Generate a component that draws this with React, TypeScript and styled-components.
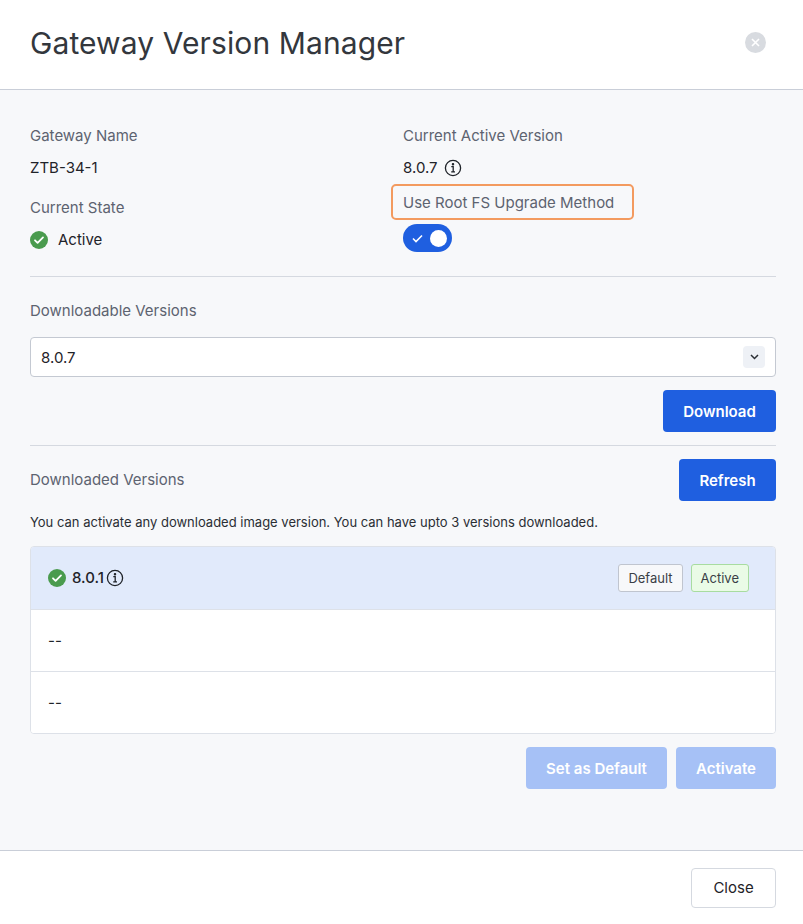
import React from "react";
import styled, { createGlobalStyle } from "styled-components";

const Global = createGlobalStyle`
  html, body { margin: 0; padding: 0; background: #fff; }
  body { font-family: Inter, "Noto Sans", sans-serif; color: #1f2329; }
`;

const Modal = styled.div`width: 803px; height: 924px; display: flex; flex-direction: column;`;
const Header = styled.div`
  height: 90px; box-sizing: border-box; border-bottom: 1px solid #c9ced8;
  display: flex; align-items: center; justify-content: space-between; padding: 0 37px 4px 30px;
`;
const Title = styled.h1`margin: 0; font-weight: 400; font-size: 30px; color: #33373d; letter-spacing: 0.1px;`;
const CloseX = styled.div`
  width: 21px; height: 21px; border-radius: 50%; background: #d8dbe0; color: #fff;
  display: flex; align-items: center; justify-content: center;
`;
const Body = styled.div`
  flex: 1; background: #f7f8fa; padding: 36px 27px 0 30px; display: flex; flex-direction: column;
`;
const Grid = styled.div`display: grid; grid-template-columns: 373px 1fr; row-gap: 20px; padding-bottom: 24px;`;
const Field = styled.div`display: flex; flex-direction: column; gap: 12px;`;
const Label = styled.div`font-size: 15px; color: #5d6370; line-height: 20px;`;
const Value = styled.div`font-size: 15px; color: #1f2329; line-height: 20px; display: flex; align-items: center; gap: 6px;`;
const Outlined = styled.div`
  margin-left: -12px; margin-top: -14px; width: 243px; height: 36px; box-sizing: border-box;
  border: 2px solid #f39a5f; border-radius: 5px; padding: 0 10px; display: flex; align-items: center;
  font-size: 15px; color: #5d6370;
`;
const Toggle = styled.div`
  width: 49px; height: 28px; border-radius: 14px; background: #1f5fe0; margin-top: -8px;
  display: flex; align-items: center; justify-content: space-between; padding: 0 5px 0 9px; box-sizing: border-box;
`;
const Knob = styled.div`width: 17px; height: 17px; border-radius: 50%; background: #fff;`;
const Divider = styled.div`height: 1px; background: #d5d9e0;`;
const Section = styled.div`display: flex; flex-direction: column; padding-top: 24px;`;
const Select = styled.div`
  margin-top: 16px; height: 40px; box-sizing: border-box; background: #fff; border: 1px solid #c4c9d2; border-radius: 4px;
  display: flex; align-items: center; justify-content: space-between; padding: 0 10px; font-size: 15px;
`;
const Chevron = styled.div`
  width: 22px; height: 22px; border-radius: 4px; background: #eef1f6; display: flex; align-items: center; justify-content: center;
`;
const Row = styled.div<{ $mt?: number; $mb?: number }>`
  display: flex; justify-content: flex-end; align-items: center; gap: 9px;
  margin-top: ${p => p.$mt ?? 0}px; margin-bottom: ${p => p.$mb ?? 0}px;
`;
const Btn = styled.button<{ $w: number; $disabled?: boolean }>`
  width: ${p => p.$w}px; height: 42px; border: none; border-radius: 4px; font-family: inherit;
  font-size: 15px; font-weight: 600; color: #fff; background: ${p => (p.$disabled ? "#a6c1f6" : "#1f5fe0")};
`;
const SpaceRow = styled.div`display: flex; justify-content: space-between; align-items: center; margin-top: 13px;`;
const Help = styled.div`font-size: 13px; color: #2a2e34; margin-top: 13px;`;
const Table = styled.div`
  margin-top: 16px; border: 1px solid #dde1e8; border-radius: 4px; background: #fff; overflow: hidden;
`;
const TRow = styled.div<{ $active?: boolean }>`
  height: 62px; box-sizing: border-box; display: flex; align-items: center; justify-content: space-between;
  padding: 0 26px 0 17px; font-size: 15px; background: ${p => (p.$active ? "#e1eafb" : "#fff")};
  & + & { border-top: 1px solid #dde1e8; }
`;
const Tag = styled.span<{ $green?: boolean }>`
  font-size: 13px; padding: 0 9px; height: 26px; display: inline-flex; align-items: center; border-radius: 3px;
  border: 1px solid ${p => (p.$green ? "#a8dca0" : "#c0c5cf")}; background: ${p => (p.$green ? "#eafbe6" : "#f7f8fa")};
  color: #3a3f47;
`;
const Tags = styled.div`display: flex; gap: 8px;`;
const Footer = styled.div`
  height: 73px; border-top: 1px solid #c9ced8; display: flex; justify-content: flex-end; align-items: center; padding-right: 27px;
`;
const CloseBtn = styled.button`
  width: 85px; height: 40px; background: #fff; border: 1px solid #d5d9e0; border-radius: 4px;
  font-family: inherit; font-size: 15px; color: #1f2329;
`;

const Info = () => (
  <svg width="18" height="18" viewBox="0 0 18 18" fill="none" stroke="#1f2329" strokeWidth="1.3">
    <circle cx="9" cy="9" r="7.6" />
    <path d="M7.3 7.6H9.2V12.8M7.2 12.8H11" />
    <circle cx="9" cy="5.2" r="0.6" fill="#1f2329" />
  </svg>
);
const Check = () => (
  <svg width="18" height="18" viewBox="0 0 18 18">
    <circle cx="9" cy="9" r="9" fill="#4a9b4e" />
    <path d="M5 9.3l2.6 2.6L13 6.4" stroke="#fff" strokeWidth="1.8" fill="none" strokeLinecap="round" strokeLinejoin="round" />
  </svg>
);

export default function App() {
  return (
    <Modal>
      <Global />
      <Header>
        <Title>Gateway Version Manager</Title>
        <CloseX>
          <svg width="9" height="9" viewBox="0 0 9 9"><path d="M1 1l7 7M8 1L1 8" stroke="#fff" strokeWidth="1.6" /></svg>
        </CloseX>
      </Header>
      <Body>
        <Grid>
          <Field><Label>Gateway Name</Label><Value>ZTB-34-1</Value></Field>
          <Field><Label>Current Active Version</Label><Value>8.0.7 <Info /></Value></Field>
          <Field><Label>Current State</Label><Value><Check /><span style={{ marginLeft: 4 }}>Active</span></Value></Field>
          <Field>
            <Outlined>Use Root FS Upgrade Method</Outlined>
            <Toggle>
              <svg width="11" height="9" viewBox="0 0 11 9"><path d="M1 4.5l3 3L10 1.5" stroke="#fff" strokeWidth="1.6" fill="none" /></svg>
              <Knob />
            </Toggle>
          </Field>
        </Grid>
        <Divider />
        <Section>
          <Label>Downloadable Versions</Label>
          <Select>
            8.0.7
            <Chevron>
              <svg width="9" height="6" viewBox="0 0 9 6"><path d="M1 1l3.5 3.5L8 1" stroke="#2a2e34" strokeWidth="1.5" fill="none" /></svg>
            </Chevron>
          </Select>
          <Row $mt={13} $mb={13}><Btn $w={113}>Download</Btn></Row>
        </Section>
        <Divider />
        <SpaceRow>
          <Label>Downloaded Versions</Label>
          <Btn $w={97}>Refresh</Btn>
        </SpaceRow>
        <Help>You can activate any downloaded image version. You can have upto 3 versions downloaded.</Help>
        <Table>
          <TRow $active>
            <Value><Check /> <span style={{ fontWeight: 500 }}>8.0.1</span><span style={{ marginLeft: -4, display: "flex" }}><Info /></span></Value>
            <Tags><Tag>Default</Tag><Tag $green>Active</Tag></Tags>
          </TRow>
          <TRow>--</TRow>
          <TRow>--</TRow>
        </Table>
        <Row $mt={13}>
          <Btn $w={141} $disabled>Set as Default</Btn>
          <Btn $w={100} $disabled>Activate</Btn>
        </Row>
      </Body>
      <Footer><CloseBtn>Close</CloseBtn></Footer>
    </Modal>
  );
}
